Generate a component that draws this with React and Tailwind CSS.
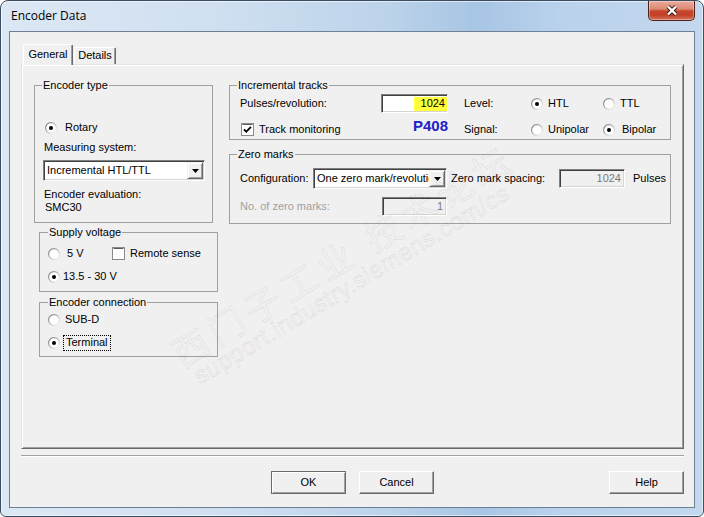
import React from "react";

// Encoder Data dialog (Win7 frame, classic controls)

const RadioIcon = ({ on }) => (
  <svg width="12" height="12" viewBox="0 0 12 12" className="shrink-0">
    <defs>
      <linearGradient id="radioEdge" x1="0" y1="0" x2="1" y2="1">
        <stop offset="0" stopColor="#6f6f6f" />
        <stop offset="0.5" stopColor="#b9b9b9" />
        <stop offset="1" stopColor="#ffffff" />
      </linearGradient>
    </defs>
    <circle cx="6" cy="6" r="5.4" fill="#ffffff" stroke="url(#radioEdge)" strokeWidth="1.2" />
    {on && <circle cx="6" cy="6" r="2" fill="#000000" />}
  </svg>
);

const CheckIcon = ({ on }) => (
  <svg width="13" height="13" viewBox="0 0 13 13" className="shrink-0">
    <rect x="0.5" y="0.5" width="12" height="12" fill="#ffffff" stroke="#8a8a8a" />
    <path d="M1.5 1.5h10" stroke="#5a5a5a" />
    {on && (
      <path d="M3 6.3 L5.3 8.7 L10 3.8" fill="none" stroke="#000000" strokeWidth="1.8" />
    )}
  </svg>
);

const ArrowBtn = () => (
  <div className="w-[16px] h-full shrink-0 bg-[#f0f0f0] border border-t-[#f0f0f0] border-l-[#f0f0f0] border-r-[#696969] border-b-[#696969] shadow-[inset_1px_1px_0_#ffffff,inset_-1px_-1px_0_#a0a0a0] flex items-center justify-center">
    <svg width="7" height="4" viewBox="0 0 7 4">
      <path d="M0 0h7L3.5 4z" fill="#000000" />
    </svg>
  </div>
);

const Combo = ({ className, text }) => (
  <div
    className={`h-[21px] bg-white border border-t-[#808080] border-l-[#808080] border-r-white border-b-white shadow-[inset_1px_1px_0_#404040,inset_-1px_-1px_0_#d4d4d4] flex items-center p-[1px] ${className}`}
  >
    <span className="flex-1 min-w-0 pl-[2px] overflow-hidden whitespace-nowrap leading-[13px]">{text}</span>
    <ArrowBtn />
  </div>
);

const Edit = ({ className, children, disabled }) => (
  <div
    className={`border border-t-[#808080] border-l-[#808080] border-r-white border-b-white shadow-[inset_1px_1px_0_#404040,inset_-1px_-1px_0_#d4d4d4] flex items-center justify-end ${
      disabled ? "bg-[#f0f0f0] text-[#7a7a7a]" : "bg-white"
    } ${className}`}
  >
    {children}
  </div>
);

const Btn = ({ children, className }) => (
  <div
    className={`w-[75px] h-[23px] bg-[#f0f0f0] border flex items-center justify-center leading-[13px] ${className}`}
  >
    {children}
  </div>
);

const Legend = ({ children, className }) => (
  <legend className={`px-[1px] leading-[13px] ${className}`}>{children}</legend>
);

export default function App() {
  return (
    <div className="w-[704px] h-[517px] relative overflow-hidden font-['Liberation_Sans',Arial,sans-serif] text-[11px] text-black">
      <div className="w-full h-full flex flex-col rounded-t-[8px] rounded-b-[6px] border border-[#3a4c62] bg-[linear-gradient(90deg,#dce7f4_0%,#d0e0f1_30%,#bcd3ea_55%,#a7c5e4_68%,#bad2ec_80%,#c3d8ee_100%)] shadow-[inset_0_0_0_1px_rgba(255,255,255,0.6)]">
        {/* title bar */}
        <div className="h-[30px] shrink-0 flex items-start">
          <div className="h-[30px] pl-[10px] flex items-center font-['Open_Sans',sans-serif] text-[12px] text-black">
            Encoder Data
          </div>
          <div className="ml-auto mr-[8px] w-[47px] h-[20px] rounded-b-[5px] border border-t-0 border-[#4e2119] bg-[linear-gradient(180deg,#e9ab9c_0%,#dc8a74_42%,#c7452d_52%,#c2412a_75%,#d7735b_100%)] shadow-[inset_0_0_0_1px_rgba(255,255,255,0.35)] flex items-center justify-center">
            <svg width="14" height="11" viewBox="0 0 14 11">
              <path d="M3 1.5 L11 9.5 M11 1.5 L3 9.5" stroke="#3d1b14" strokeWidth="4.2" />
              <path d="M3 1.5 L11 9.5 M11 1.5 L3 9.5" stroke="#ffffff" strokeWidth="2.4" />
            </svg>
          </div>
        </div>

        {/* client area */}
        <div className="mx-[8px] mb-[8px] flex-1 border border-[#6e8096] bg-[#f0f0f0] pt-[12px] pl-[11px]">
          {/* tabs */}
          <div className="flex items-end h-[20px] pl-[2px]">
            <div className="relative z-10 -mb-px h-[21px] w-[50px] bg-[#f0f0f0] rounded-t-[2px] border border-b-0 border-t-white border-l-white border-r-[#696969] shadow-[inset_-1px_0_0_#a0a0a0] flex justify-center pt-[3px] leading-[13px]">
              General
            </div>
            <div className="ml-[1px] h-[17px] w-[42px] bg-[#f0f0f0] rounded-t-[2px] border border-b-0 border-t-white border-l-white border-r-[#696969] shadow-[inset_-1px_0_0_#a0a0a0] flex justify-center pt-[1px] leading-[13px]">
              Details
            </div>
          </div>

          {/* tab panel */}
          <div className="w-[663px] h-[385px] border border-t-[#e3e3e3] border-l-[#e3e3e3] border-r-[#696969] border-b-[#696969] shadow-[inset_1px_1px_0_#ffffff,inset_-1px_-1px_0_#a0a0a0] flex pt-[14px] pl-[12px]">
            {/* left column */}
            <div className="w-[184px] flex flex-col">
              <fieldset className="w-[179px] h-[144px] border border-[#a0a0a0]">
                <Legend className="ml-[7px]">Encoder type</Legend>
                <div className="mt-[29px] ml-[10px] h-[13px] flex items-center">
                  <RadioIcon on />
                  <span className="ml-[8px]">Rotary</span>
                </div>
                <div className="mt-[7px] ml-[9px] leading-[13px]">Measuring system:</div>
                <Combo className="mt-[6px] ml-[8px] w-[162px]" text="Incremental HTL/TTL" />
                <div className="mt-[7px] ml-[9px] leading-[13px]">Encoder evaluation:</div>
                <div className="ml-[10px] leading-[13px]">SMC30</div>
              </fieldset>

              <fieldset className="mt-[3px] ml-[5px] w-[179px] h-[66px] border border-[#a0a0a0]">
                <Legend className="ml-[8px]">Supply voltage</Legend>
                <div className="mt-[8px] h-[13px] flex items-center">
                  <div className="ml-[8px] w-[64px] flex items-center">
                    <RadioIcon />
                    <span className="ml-[7px]">5 V</span>
                  </div>
                  <CheckIcon />
                  <span className="ml-[5px]">Remote sense</span>
                </div>
                <div className="mt-[10px] ml-[8px] h-[13px] flex items-center">
                  <RadioIcon on />
                  <span className="ml-[3px]">13.5 - 30 V</span>
                </div>
              </fieldset>

              <fieldset className="mt-[4px] ml-[5px] w-[179px] h-[61px] border border-[#a0a0a0]">
                <Legend className="ml-[8px]">Encoder connection</Legend>
                <div className="mt-[4px] ml-[8px] h-[13px] flex items-center">
                  <RadioIcon />
                  <span className="ml-[5px]">SUB-D</span>
                </div>
                <div className="mt-[10px] ml-[8px] h-[13px] flex items-center">
                  <RadioIcon on />
                  <span className="ml-[3px] h-[16px] px-[2px] border border-dotted border-black flex items-center">
                    Terminal
                  </span>
                </div>
              </fieldset>
            </div>

            {/* right column */}
            <div className="ml-[11px] w-[442px] flex flex-col">
              <fieldset className="w-[442px] h-[61px] border border-[#a0a0a0]">
                <Legend className="ml-[7px]">Incremental tracks</Legend>
                <div className="mt-[1px] h-[21px] flex items-center">
                  <span className="ml-[10px] w-[141px]">Pulses/revolution:</span>
                  <Edit className="w-[67px] h-[19px]">
                    <span className="h-[14px] w-[33px] bg-[#ffff3a] flex items-center justify-end pr-[2px]">1024</span>
                  </Edit>
                  <span className="ml-[16px] w-[67px]">Level:</span>
                  <div className="w-[72px] flex items-center">
                    <RadioIcon on />
                    <span className="ml-[5px]">HTL</span>
                  </div>
                  <div className="flex items-center">
                    <RadioIcon />
                    <span className="ml-[5px]">TTL</span>
                  </div>
                </div>
                <div className="mt-[5px] h-[21px] flex items-center">
                  <div className="ml-[11px] w-[172px] flex items-center">
                    <CheckIcon on />
                    <span className="ml-[5px]">Track monitoring</span>
                  </div>
                  <span className="w-[51px] mb-[9px] font-bold text-[15px] leading-[15px] text-[#2121c6]">P408</span>
                  <span className="w-[67px]">Signal:</span>
                  <div className="w-[72px] flex items-center">
                    <RadioIcon />
                    <span className="ml-[5px]">Unipolar</span>
                  </div>
                  <div className="flex items-center">
                    <RadioIcon on />
                    <span className="ml-[7px]">Bipolar</span>
                  </div>
                </div>
              </fieldset>

              <fieldset className="mt-[8px] w-[442px] h-[76px] border border-[#a0a0a0]">
                <Legend className="ml-[7px]">Zero marks</Legend>
                <div className="mt-[7px] h-[21px] flex items-center">
                  <span className="ml-[10px] w-[73px]">Configuration:</span>
                  <Combo className="w-[134px]" text="One zero mark/revolution" />
                  <span className="ml-[4px] w-[108px]">Zero mark spacing:</span>
                  <Edit disabled className="w-[66px] h-[19px] pr-[3px]">1024</Edit>
                  <span className="ml-[8px]">Pulses</span>
                </div>
                <div className="mt-[7px] h-[20px] flex items-center">
                  <span className="ml-[10px] w-[142px] text-[#a0a0a0]">No. of zero marks:</span>
                  <Edit disabled className="w-[65px] h-[19px] pr-[3px]">1</Edit>
                </div>
              </fieldset>
            </div>
          </div>

          {/* separator */}
          <div className="mt-[6px] w-[663px] h-[2px] border-t border-t-[#a0a0a0] border-b border-b-white" />

          {/* buttons */}
          <div className="mt-[14px] w-[663px] flex">
            <Btn className="ml-[250px] border-[#6a6a6a] shadow-[inset_1px_1px_0_#ffffff,inset_-1px_-1px_0_#a0a0a0]">OK</Btn>
            <Btn className="ml-[13px] border-t-white border-l-white border-r-[#696969] border-b-[#696969] shadow-[inset_-1px_-1px_0_#a0a0a0]">Cancel</Btn>
            <Btn className="ml-auto border-t-white border-l-white border-r-[#696969] border-b-[#696969] shadow-[inset_-1px_-1px_0_#a0a0a0]">Help</Btn>
          </div>
        </div>
      </div>

      {/* faint forum watermark over the dialog */}
      <div className="pointer-events-none absolute left-[174px] top-[335px] h-[40px] leading-[40px] whitespace-nowrap origin-left rotate-[-31deg] font-['Noto_Sans_CJK_SC',sans-serif] text-[36px] tracking-[6px] text-transparent [-webkit-text-stroke:1px_rgba(0,0,0,0.07)]">
        西门子工业 技术论坛
      </div>
      <div className="pointer-events-none absolute left-[196px] top-[364px] h-[28px] leading-[28px] whitespace-nowrap origin-left rotate-[-31deg] font-['Liberation_Sans',sans-serif] text-[24px] tracking-[0.5px] text-transparent [-webkit-text-stroke:1px_rgba(0,0,0,0.07)]">
        support.industry.siemens.com/cs
      </div>
    </div>
  );
}
